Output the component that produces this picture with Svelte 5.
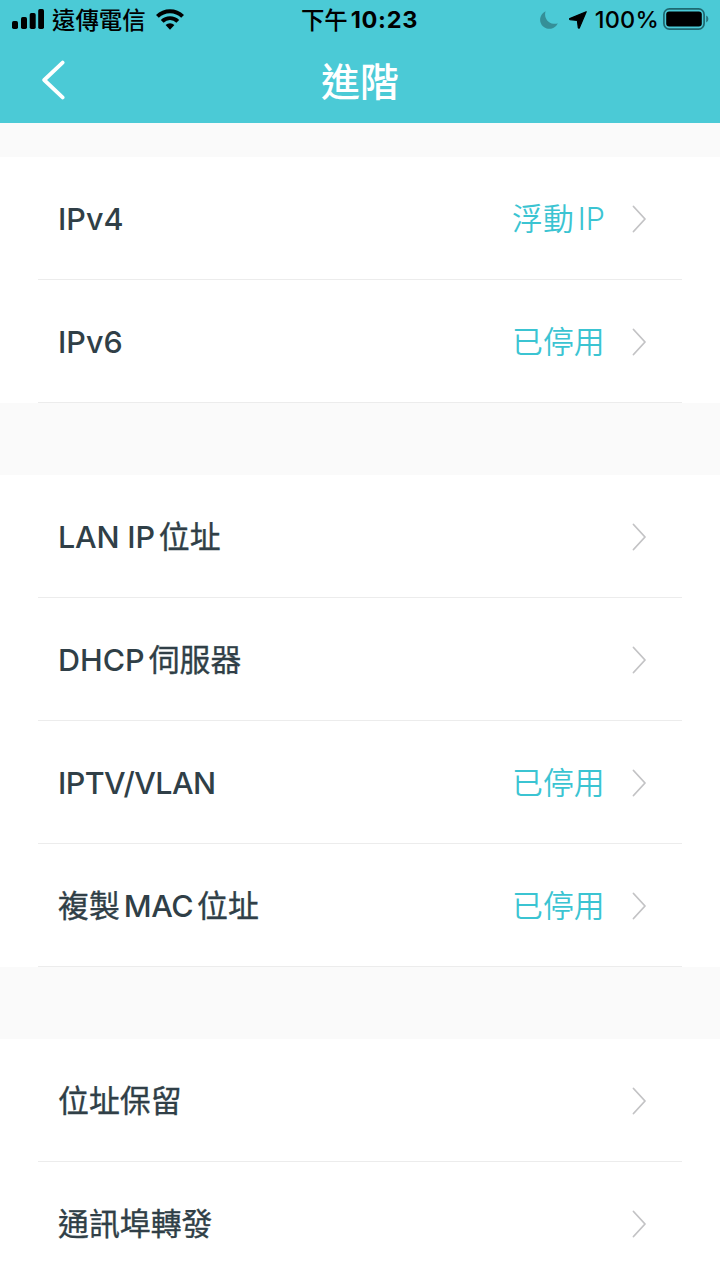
<script>
  const groups = [
    [
      { label: 'IPv4', value: '浮動IP' },
      { label: 'IPv6', value: '已停用' },
    ],
    [
      { label: 'LAN IP位址', tracking: -0.2 },
      { label: 'DHCP伺服器' },
      { label: 'IPTV/VLAN', value: '已停用', tracking: -0.6 },
      { label: '複製MAC位址', value: '已停用', tracking: -0.5 },
    ],
    [{ label: '位址保留' }, { label: '通訊埠轉發' }],
  ];

  // Latin and Han runs get different fonts and tracking
  function runs(text) {
    return (text.match(/[\x20-\x7e]+|[^\x20-\x7e]+/g) ?? []).map((part) => ({
      part,
      han: part.charCodeAt(0) > 127,
    }));
  }
</script>

{#snippet mixed(text, tracking = 0)}
  {#each runs(text) as run, i (i)}
    {#if run.han}
      <span class="han">{run.part}</span>
    {:else}
      <span class="latin" style:letter-spacing={`${tracking}px`}>{run.part}</span>
    {/if}
  {/each}
{/snippet}

<div class="screen">
  <header>
    <div class="status">
      <div class="side">
        <svg class="signal" width="32" height="20" viewBox="0 0 32 20">
          <rect x="0" y="12" width="6" height="8" rx="1.7" />
          <rect x="9" y="8" width="6" height="12" rx="1.7" />
          <rect x="17.7" y="4" width="6" height="16" rx="1.7" />
          <rect x="26.2" y="0" width="5.8" height="20" rx="1.7" />
        </svg>
        <span class="carrier">遠傳電信</span>
        <svg class="wifi" width="28" height="21" viewBox="0 0 28 21">
          <path d="M0 6 A20 20 0 0 1 28 6 L25.2 8.8 A16 16 0 0 0 2.8 8.8 Z" />
          <path d="M4.8 11 A13.2 13.2 0 0 1 23.2 11 L20.4 13.7 A9.2 9.2 0 0 0 7.6 13.7 Z" />
          <path d="M9.6 16 A6.4 6.4 0 0 1 18.4 16 L14 20.7 Z" />
        </svg>
      </div>
      <div class="clock"><span class="ampm">下午</span><span class="time">10:23</span></div>
      <div class="side right">
        <svg class="moon" width="18" height="18" viewBox="0 0 18 18">
          <path d="M5.6 0.2 A9.2 9.2 0 1 0 17.8 12.2 C16.5 12.8 15 13 13.4 12.7 C7.5 12 3.6 6.2 5.6 0.2 Z" />
        </svg>
        <svg class="location" width="18" height="18" viewBox="0 0 18 18">
          <path d="M17.2 0.7 L0.8 7.6 Q0.2 8 1 8.6 L8.4 9.5 L9.3 16.7 Q9.8 17.6 10.4 16.8 Z" stroke="#000" stroke-width="1.2" stroke-linejoin="round" />
        </svg>
        <span class="percent">100%</span>
        <svg class="battery" width="46" height="22" viewBox="0 0 46 22">
          <rect x="0.9" y="0.9" width="40.2" height="20.2" rx="5.5" fill="none" stroke="#1e6870" stroke-width="1.7" />
          <rect x="3.2" y="3.4" width="35.6" height="15.2" rx="3" />
          <path d="M43.2 7.6 Q45.4 8.4 45.4 11 T43.2 14.4 Z" fill="#28757d" />
        </svg>
      </div>
    </div>
    <nav>
      <svg class="back" width="24" height="40" viewBox="0 0 24 40">
        <path d="M20.6 2.6 L2.2 20 L20.6 37.4" />
      </svg>
      <h1>進階</h1>
    </nav>
  </header>

  <main>
    {#each groups as rows, g (g)}
      <section>
        {#each rows as row (row.label)}
          <div class="row">
            <div class="label">{@render mixed(row.label, row.tracking)}</div>
            {#if row.value}
              <div class="value">{@render mixed(row.value)}</div>
            {/if}
            <svg class="chevron" width="15" height="28" viewBox="0 0 15 28">
              <path d="M1.5 1.5 L13 14 L1.5 26.5" />
            </svg>
          </div>
        {/each}
      </section>
    {/each}
  </main>
</div>

<style>
  :global(body) {
    margin: 0;
    background: #fafafa;
  }

  .screen {
    width: 720px;
    height: 1281px;
    overflow: hidden;
    background: #fafafa;
    font-family: Inter, 'Noto Sans CJK TC', sans-serif;
    color: #303f47;
  }

  header {
    height: 123px;
    background: #4bcad6;
  }

  .status {
    display: grid;
    grid-template-columns: 1fr auto 1fr;
    align-items: center;
    height: 40px;
    padding: 0 11px 0 12px;
    color: #000;
    line-height: 40px;
    white-space: nowrap;
  }

  .side,
  .clock {
    display: flex;
    align-items: center;
  }

  .right {
    justify-content: flex-end;
  }

  .signal,
  .wifi,
  .battery {
    margin-bottom: 2px;
  }

  .carrier,
  .ampm {
    font-family: 'Noto Sans CJK TC', sans-serif;
    font-size: 23.4px;
    font-weight: 500;
    line-height: 38px;
    padding-bottom: 2px;
  }

  .carrier {
    margin-left: 8px;
  }

  .wifi {
    margin-left: 10px;
  }

  .ampm {
    margin-left: -2px;
  }

  .time {
    margin-left: 3px;
    font-size: 23.5px;
    font-weight: 700;
    letter-spacing: 0.7px;
  }

  .moon {
    fill: #358f98;
    margin-right: 11px;
  }

  .percent {
    margin-left: 8px;
    font-size: 23.5px;
    font-weight: 500;
    letter-spacing: 0.2px;
  }

  .battery {
    margin-left: 4px;
  }

  nav {
    display: grid;
    grid-template-columns: 24px 1fr 24px;
    align-items: center;
    height: 80px;
    padding: 0 42px;
  }

  .back path {
    fill: none;
    stroke: #fff;
    stroke-width: 3.8;
    stroke-linecap: round;
    stroke-linejoin: round;
  }

  h1 {
    margin: 0;
    padding-bottom: 2px;
    color: #fff;
    font-family: 'Noto Sans CJK TC', sans-serif;
    font-size: 39px;
    font-weight: 500;
    line-height: 78px;
    text-align: center;
  }

  main {
    display: flex;
    flex-direction: column;
    gap: 72.5px;
    padding-top: 34px;
  }

  section {
    padding: 0 38px;
    background: #fff;
  }

  .row {
    display: flex;
    align-items: center;
    box-sizing: border-box;
    height: 122.9px;
    padding: 2px 35px 0 20px;
    border-bottom: 1px solid #ececec;
    line-height: 60px;
    white-space: nowrap;
  }

  .label,
  .value {
    display: flex;
    align-items: center;
    gap: 4px;
  }

  .label {
    flex: 1;
    font-weight: 500;
  }

  .value {
    width: 92px;
    margin-right: 28px;
    color: #3bc4d2;
    font-weight: 350;
  }

  .han {
    font-family: 'Noto Sans CJK TC', sans-serif;
    font-size: 30.9px;
    line-height: 56px;
    padding-bottom: 4px;
  }

  .label .han {
    font-weight: 400;
    -webkit-text-stroke: 0.35px currentColor;
  }

  .latin {
    font-size: 30.5px;
    white-space: pre;
  }

  .chevron path {
    fill: none;
    stroke: #c3c3c5;
    stroke-width: 1.8;
    stroke-linecap: round;
    stroke-linejoin: round;
  }
</style>
